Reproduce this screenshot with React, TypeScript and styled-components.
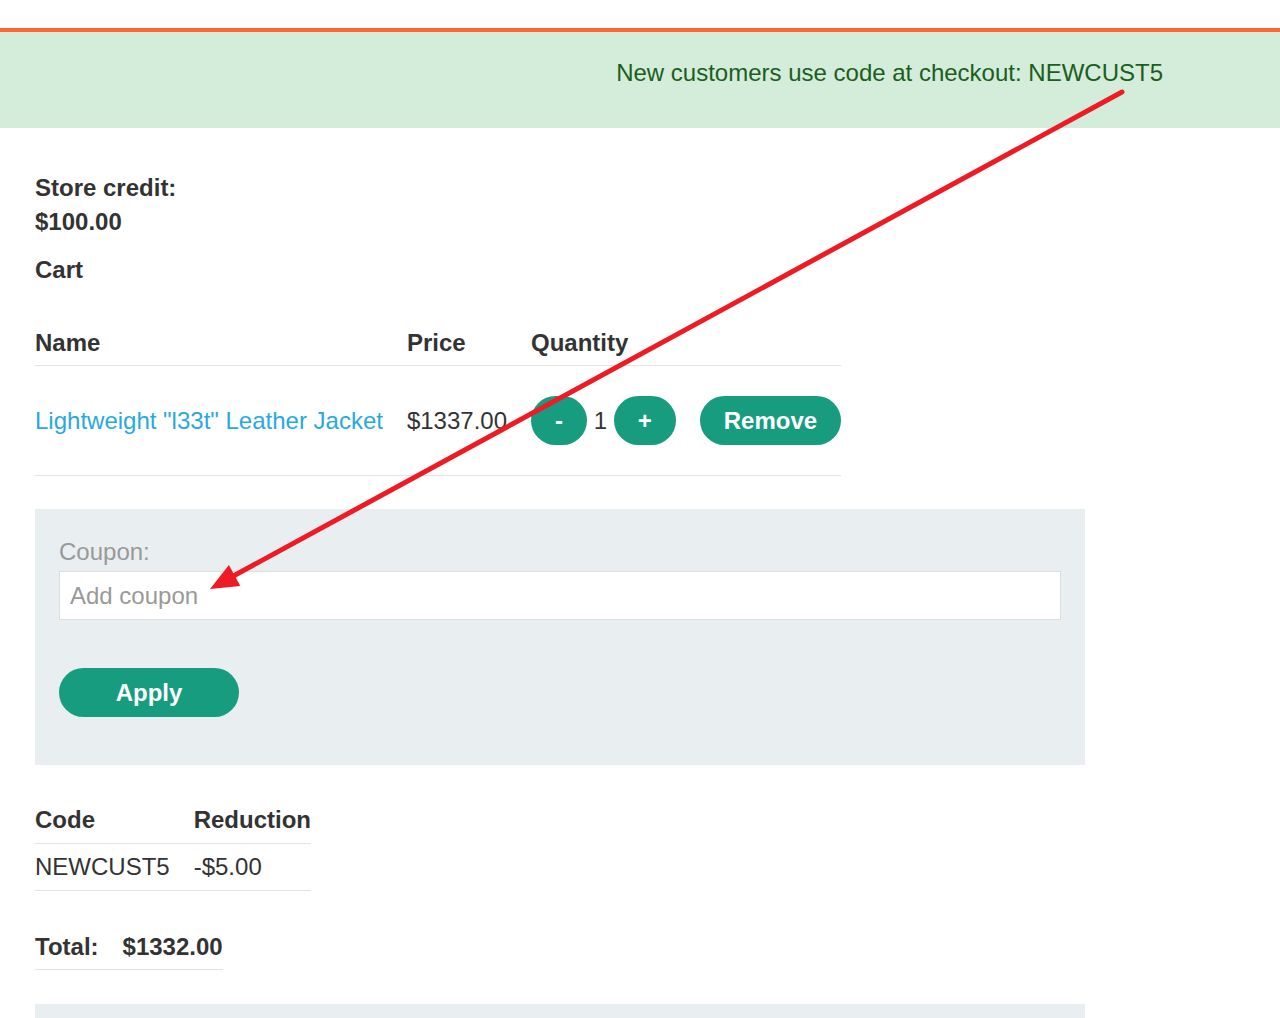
import React from "react";
import styled, { createGlobalStyle } from "styled-components";

const GlobalStyle = createGlobalStyle`
  html, body {
    margin: 0;
    padding: 0;
    background: #ffffff;
  }
  body {
    font-family: "Liberation Sans", Arial, Helvetica, sans-serif;
    font-size: 24px;
    line-height: 1.4;
    color: #333333;
  }
  * { box-sizing: border-box; }
`;

const Page = styled.div`
  position: relative;
  padding-top: 28px;
  min-height: 1018px;
`;

const Banner = styled.div`
  border-top: 4px solid #ff6633;
  background: #d4ecda;
  height: 100px;
  padding: 24px 117px 0 0;
  text-align: right;
  color: #1b5e20;
`;

const Main = styled.main`
  padding: 0 35px;
`;

const Credit = styled.div`
  margin-top: 43px;
  font-weight: bold;
`;

const Heading = styled.div`
  margin-top: 15px;
  font-weight: bold;
`;

const Table = styled.table<{ $mt: number }>`
  border-collapse: collapse;
  margin-top: ${(p) => p.$mt}px;
`;

const Th = styled.th`
  text-align: left;
  font-weight: bold;
  padding: 5px 24px 6px 0;
  border-bottom: 1px solid #e3e3e3;
  white-space: nowrap;
  &:last-child { padding-right: 0; }
`;

const Td = styled.td<{ $pad?: number; $bold?: boolean }>`
  text-align: left;
  padding: ${(p) => p.$pad ?? 6}px 24px ${(p) => p.$pad ?? 6}px 0;
  border-bottom: 1px solid #e3e3e3;
  vertical-align: middle;
  white-space: nowrap;
  font-weight: ${(p) => (p.$bold ? "bold" : "normal")};
  &:last-child { padding-right: 0; }
`;

const ProductLink = styled.a`
  color: #29a9e1;
  text-decoration: none;
`;

const Qty = styled.div`
  display: flex;
  align-items: center;
  gap: 6.67px;
`;

const PillButton = styled.button<{ $minWidth?: number }>`
  font-family: inherit;
  font-size: 24px;
  font-weight: bold;
  line-height: 1.4;
  color: #ffffff;
  background: #179c80;
  border: none;
  border-radius: 25px;
  height: 49px;
  padding: 0 24px;
  min-width: ${(p) => p.$minWidth ?? 0}px;
  cursor: pointer;
`;

const CouponPanel = styled.section`
  margin-top: 33px;
  width: 1050px;
  background: #e9eff1;
  padding: 24px 24px 48px;
`;

const Label = styled.label`
  display: block;
  color: #999999;
  margin: 2px 0 2.4px;
`;

const Input = styled.input`
  display: block;
  width: 100%;
  height: 49px;
  border: 1px solid #dedede;
  background: #ffffff;
  font-family: inherit;
  font-size: 24px;
  padding: 0 10px;
  color: #333;
  outline: none;
  &::placeholder { color: #999999; }
`;

const ApplyRow = styled.div`
  margin-top: 48px;
`;

const NextPanel = styled.section`
  margin-top: 34px;
  width: 1050px;
  height: 120px;
  background: #e9eff1;
`;

const Overlay = styled.svg`
  position: absolute;
  top: 0;
  left: 0;
  pointer-events: none;
`;

export default function App() {
  return (
    <>
      <GlobalStyle />
      <Page>
        <Banner>New customers use code at checkout: NEWCUST5</Banner>
        <Main>
          <Credit>
            Store credit:
            <br />
            $100.00
          </Credit>
          <Heading>Cart</Heading>
          <Table $mt={34}>
            <thead>
              <tr>
                <Th>Name</Th>
                <Th>Price</Th>
                <Th>Quantity</Th>
                <Th></Th>
              </tr>
            </thead>
            <tbody>
              <tr>
                <Td $pad={30}>
                  <ProductLink href="#">Lightweight "l33t" Leather Jacket</ProductLink>
                </Td>
                <Td $pad={30}>$1337.00</Td>
                <Td $pad={30}>
                  <Qty>
                    <PillButton>-</PillButton>
                    <span>1</span>
                    <PillButton>+</PillButton>
                  </Qty>
                </Td>
                <Td $pad={30}>
                  <PillButton>Remove</PillButton>
                </Td>
              </tr>
            </tbody>
          </Table>

          <CouponPanel>
            <Label htmlFor="coupon">Coupon:</Label>
            <Input id="coupon" placeholder="Add coupon" />
            <ApplyRow>
              <PillButton $minWidth={180}>Apply</PillButton>
            </ApplyRow>
          </CouponPanel>

          <Table $mt={33}>
            <thead>
              <tr>
                <Th>Code</Th>
                <Th>Reduction</Th>
              </tr>
            </thead>
            <tbody>
              <tr>
                <Td>NEWCUST5</Td>
                <Td>-$5.00</Td>
              </tr>
            </tbody>
          </Table>

          <Table $mt={33}>
            <tbody>
              <tr>
                <Td $bold>Total:</Td>
                <Td $bold>$1332.00</Td>
              </tr>
            </tbody>
          </Table>

          <NextPanel />
        </Main>

        <Overlay width="1280" height="1018" viewBox="0 0 1280 1018">
          <line
            x1="1122"
            y1="92"
            x2="226"
            y2="580"
            stroke="#ed1c24"
            strokeWidth="5"
            strokeLinecap="round"
          />
          <polygon points="210,589 228.9,565.1 240.3,586.1" fill="#ed1c24" />
        </Overlay>
      </Page>
    </>
  );
}
